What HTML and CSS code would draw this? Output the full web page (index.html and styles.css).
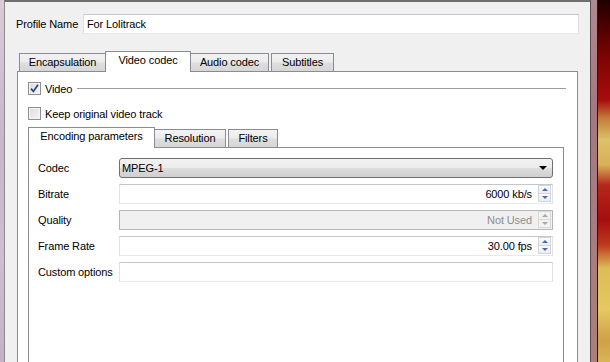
FILE: index.html
```html
<!DOCTYPE html>
<html>
<head>
  <title>Profile</title>
  <link rel="stylesheet" href="styles.css">
</head>
<body>

<div class="desk">
  <div class="frame-left"></div>

  <div class="dialog">
    <div class="profile-row">
      <label class="profile-label">Profile Name</label>
      <div class="text-field profile-field">For Lolitrack</div>
    </div>

    <div class="tabbar">
      <div class="tab tab-encap">Encapsulation</div>
      <div class="tab tab-video active">Video codec</div>
      <div class="tab tab-audio">Audio codec</div>
      <div class="tab tab-subs">Subtitles</div>
    </div>

    <div class="pane">
      <div class="group-title">
        <span class="checkbox">
          <svg width="13" height="13" viewBox="0 0 13 13">
            <path d="M3 6.6 L5.4 9.4 L10 2.8" fill="none" stroke="#2c4384" stroke-width="1.7"/>
          </svg>
        </span>
        <span class="group-name">Video</span>
        <span class="group-line"></span>
      </div>

      <div class="check-row">
        <span class="checkbox"></span>
        <span class="check-text">Keep original video track</span>
      </div>

      <div class="tabbar inner-tabbar">
        <div class="tab tab-enc active">Encoding parameters</div>
        <div class="tab tab-res">Resolution</div>
        <div class="tab tab-filters">Filters</div>
      </div>

      <div class="inner-pane">
        <div class="form">
          <label>Codec</label>
          <div class="combo">
            <span>MPEG-1</span>
            <span class="combo-arrow"></span>
          </div>

          <label>Bitrate</label>
          <div class="spin-field">
            <span class="spin-value">6000 kb/s</span>
            <span class="spin">
              <span class="spin-btn"><i class="arrow-up"></i></span>
              <span class="spin-btn"><i class="arrow-down"></i></span>
            </span>
          </div>

          <label>Quality</label>
          <div class="spin-field disabled">
            <span class="spin-value">Not Used</span>
            <span class="spin">
              <span class="spin-btn"><i class="arrow-up"></i></span>
              <span class="spin-btn"><i class="arrow-down"></i></span>
            </span>
          </div>

          <label>Frame Rate</label>
          <div class="spin-field">
            <span class="spin-value">30.00 fps</span>
            <span class="spin">
              <span class="spin-btn"><i class="arrow-up"></i></span>
              <span class="spin-btn"><i class="arrow-down"></i></span>
            </span>
          </div>

          <label>Custom options</label>
          <div class="text-field"></div>
        </div>
      </div>
    </div>
  </div>

  <div class="frame-right"></div>
  <div class="photo"></div>
</div>

</body>
</html>
```

FILE: styles.css
```css
* {
  box-sizing: border-box;
}

body {
  margin: 0;
  width: 610px;
  height: 362px;
  overflow: hidden;
  font-family: "Liberation Sans", Arial, sans-serif;
  font-size: 11px;
  letter-spacing: -0.12px;
  color: #000;
  background: #cbbdcb;
}

.desk {
  display: flex;
  height: 362px;
  overflow: hidden;
}

.frame-left {
  width: 4px;
  background: linear-gradient(#d8ccd8, #c6b6c8 40%, #cdbfce 70%, #c2b2c4);
}

.dialog {
  width: 587px;
  overflow: hidden;
  background: #f0f0f0;
  border-top: 2px solid #6f6f6f;
  border-left: 1px solid #8c8c8c;
  border-right: 1px solid #5e4b4e;
  padding: 12px 11px 0 12px;
}

.frame-right {
  width: 6px;
  background: linear-gradient(#b08a90, #a47880 30%, #a87c80 60%, #ab8078);
}

.photo {
  width: 13px;
  border-left: 1px solid #3a0c0c;
  background: linear-gradient(to bottom,
    #1e0000 0px, #420000 20px, #7a0404 55px, #a80c0c 100px,
    #c47a3a 118px, #dcc06a 140px, #d8b058 165px, #b4281a 185px,
    #a60e0e 220px, #bc3a1c 245px, #dcbc58 268px, #e4c860 310px,
    #cfa048 340px, #d8b458 362px);
}

/* profile name */
.profile-row {
  display: flex;
  align-items: center;
  height: 20px;
}

.profile-label {
  width: 67px;
  margin-left: -1px;
}

.text-field {
  height: 20px;
  background: #fff;
  border: 1px solid;
  border-color: #c3c6cc #dfe2e7 #e6e9ed #dfe2e7;
}

.profile-field {
  flex: 1;
  padding-left: 3px;
  line-height: 18px;
}

/* tabs */
.tabbar {
  display: flex;
  align-items: flex-end;
  height: 20px;
  margin-top: 17px;
}

.tab {
  height: 18px;
  border: 1px solid #898c95;
  border-bottom: none;
  background: linear-gradient(#f3f3f3, #ebebeb 48%, #dedede 52%, #d6d6d6);
  text-align: center;
  line-height: 16px;
  white-space: nowrap;
}

.tab.active {
  height: 21px;
  margin-bottom: -1px;
  background: #fff;
  position: relative;
  z-index: 1;
  line-height: 17px;
}

.tab-encap { width: 87px; margin-left: 2px; }
.tab-video { width: 86px; margin-left: -1px; }
.tab-audio { width: 79px; margin-left: -1px; }
.tab-subs { width: 63px; margin-left: 2px; }

.pane {
  height: 292px;
  margin-right: 1px;
  background: #fff;
  border: 1px solid #898c95;
  padding: 10px 11px 0 10px;
}

/* checkboxes */
.checkbox {
  width: 13px;
  height: 13px;
  flex: none;
  border: 1px solid #8e8f8f;
  background: linear-gradient(135deg, #dcdcdc, #f6f6f6);
  box-shadow: inset 0 0 0 1px #f4f4f4;
  display: block;
}

.checkbox svg {
  display: block;
  margin: -1px;
}

.group-title,
.check-row {
  display: flex;
  align-items: center;
  height: 13px;
}

.group-name,
.check-text {
  margin-left: 4px;
}

.group-line {
  flex: 1;
  height: 1px;
  margin-left: 5px;
  background: #9c9c9c;
}

.check-row {
  margin-top: 12px;
}

/* inner tabs */
.inner-tabbar {
  margin-top: 7px;
}

.tab-enc { width: 127px; }
.tab-res { width: 72px; margin-left: -1px; }
.tab-filters { width: 50px; margin-left: 2px; }

.inner-pane {
  width: 536px;
  height: 216px;
  border: 1px solid #898c95;
  padding: 10px 10px 0 9px;
}

.form {
  display: grid;
  grid-template-columns: 81px 1fr;
  grid-auto-rows: 20px;
  row-gap: 6px;
  align-items: center;
}

/* combo */
.combo {
  height: 20px;
  display: flex;
  align-items: center;
  justify-content: space-between;
  padding: 0 5px 0 2px;
  border: 1px solid #707070;
  border-radius: 3px;
  background: linear-gradient(#f2f2f2, #ebebeb 48%, #dddddd 52%, #cfcfcf);
}

.combo-arrow {
  width: 0;
  height: 0;
  border-left: 4px solid transparent;
  border-right: 4px solid transparent;
  border-top: 4px solid #000;
}

/* spin boxes */
.spin-field {
  height: 20px;
  display: flex;
  background: #fff;
  border: 1px solid;
  border-color: #c3c6cc #dfe2e7 #e6e9ed #dfe2e7;
}

.spin-value {
  flex: 1;
  text-align: right;
  padding-right: 6px;
  line-height: 18px;
}

.spin {
  width: 14px;
  display: flex;
  flex-direction: column;
  padding: 0 1px 1px 0;
}

.spin-btn {
  flex: 1;
  display: flex;
  align-items: center;
  justify-content: center;
  border: 1px solid #d2d5dc;
  background: linear-gradient(#fbfbfb, #ebedf1);
}

.spin-btn + .spin-btn {
  border-top: none;
}

.arrow-up {
  border-left: 3px solid transparent;
  border-right: 3px solid transparent;
  border-bottom: 3px solid #4e67a8;
}

.arrow-down {
  border-left: 3px solid transparent;
  border-right: 3px solid transparent;
  border-top: 3px solid #4e67a8;
}

.spin-field.disabled {
  background: #f0f0f0;
  border-color: #b4b6ba;
}

.disabled .spin-value {
  color: #8d8d8d;
}

.disabled .spin-btn {
  background: #f2f2f2;
  border-color: #d8d8d8;
}

.disabled .arrow-up { border-bottom-color: #a8a8a8; }
.disabled .arrow-down { border-top-color: #a8a8a8; }
```
